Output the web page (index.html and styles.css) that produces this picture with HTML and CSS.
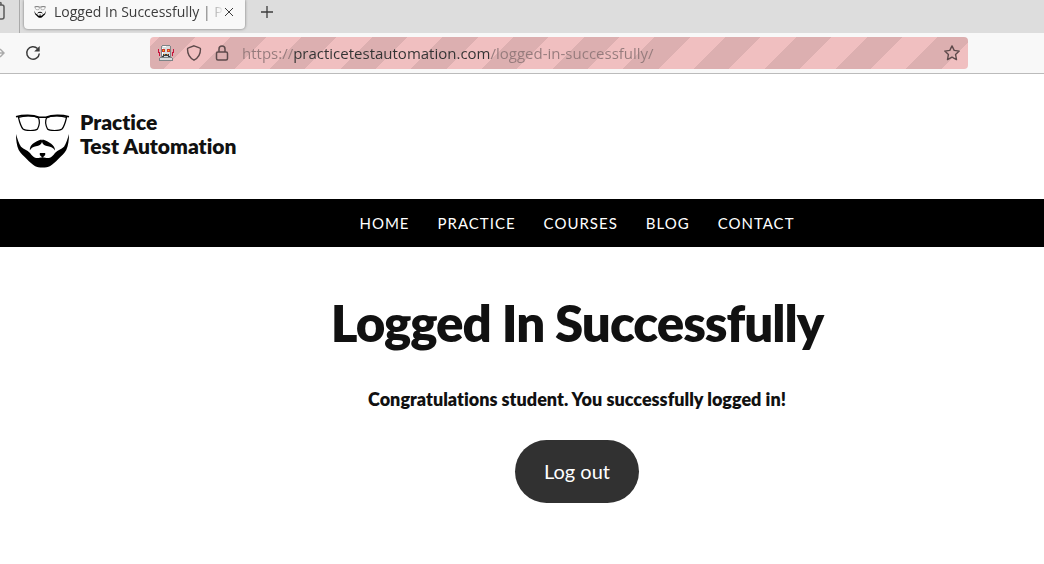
FILE: index.html
```html
<!DOCTYPE html>
<html lang="en">
<head>
    <meta charset="UTF-8">
    <meta name="viewport" content="width=device-width, initial-scale=1.0">
    <title>Logged In Successfully | Practice Test Automation</title>
    <link rel="stylesheet" href="styles.css">
</head>
<body>
    <svg class="sprite" aria-hidden="true">
        <symbol id="beard" viewBox="0 0 56 56">
            <path fill="none" stroke="#000" stroke-width="1.2" d="M4.500 4.500C10 2.300 20 2.300 24.500 5c1.500 3 .5 8-1 11-2 2-12 2-14.500 0C6.500 13 5.500 9 4.500 4.500zM52.500 4.500C47 2.300 37 2.300 32.500 5c-1.500 3-.5 8 1 11 2 2 12 2 14.500 0 2.500-3 3.500-7 4.500-11.500z"/>
            <path fill="none" stroke="#000" stroke-width="1.600" d="M2 3.800c7-2 17-2 23 .4h7c6-2.400 16-2.400 23-.4"/>
            <path d="M2 21c1.500 5 3 10 5 12.700 3 3 6 3 9 6.300 2 2.500 3 4 6 5 2.500.5 4-.8 6.500-.8s4 1.300 6.500.8c3-1 4-2.500 6-5 3-3.300 6-3.300 9-6.300 2-2.700 3.500-7.700 5-12.700 0 6-.7 11.500-2.700 16-2 3.500-5 6-8 9-3 3-5.500 5.500-8.500 7.300-3 1.700-11.600 1.700-14.600 0-3-1.800-5.500-4.300-8.500-7.300-3-3-6-5.500-8-9C2.700 32.500 2 27 2 21z"/>
            <path d="M27.300 26.500c-3 .5-6 2.500-8.500 4.300-2.300 1.700-3 4-3 6.700 1.500-3 3.500-4 6.200-4.300 3-.3 5.300-1.700 6-4.200.7 2.500 3 3.900 6 4.200 2.700.3 5.500 1.300 7 4.300 0-2.700-1.500-5-3.800-6.700-2.500-1.800-5.500-3.800-8.500-4.300l-.7 1zM25.800 40h5.400v2l-2.700 2.800-2.700-2.800z"/>
        </symbol>
    </svg>

    <div class="tabs">
        <button class="tab-list" aria-label="Recent tabs">
            <svg width="5" height="20" viewBox="0 0 5 20" fill="none" stroke="#5b5b5b" stroke-width="1.500"><path d="M-2 4h4a2 2 0 0 1 2 2v10a2 2 0 0 1-2 2h-4M1 4V2l-2-1"/></svg>
        </button>
        <div class="tab">
            <svg class="favicon" width="12" height="12"><use href="#beard"/></svg>
            <span class="tab-title">Logged In Successfully | Practice</span>
            <button class="icon" aria-label="Close tab">
                <svg width="10" height="10" viewBox="0 0 10 10" stroke="#3c3c3c"><path d="M1 1l8 8M9 1l-8 8"/></svg>
            </button>
        </div>
        <button class="icon new-tab" aria-label="New tab">
            <svg width="12" height="12" viewBox="0 0 12 12" stroke="#3c3c3c" stroke-width="1.300"><path d="M6 0v12M0 6h12"/></svg>
        </button>
    </div>

    <div class="toolbar">
        <button class="icon" aria-label="Forward">
            <svg width="5" height="10" viewBox="0 0 5 10" fill="none" stroke="#aaa" stroke-width="1.500"><path d="M0 1l4 4-4 4M0 5h4"/></svg>
        </button>
        <button class="icon reload" aria-label="Reload">
            <svg width="16" height="16" viewBox="0 0 16 16"><path fill="none" stroke="#3c3c3c" stroke-width="1.500" d="M12.500 3.500A6.300 6.300 0 1 0 14.300 8.500"/><path fill="#3c3c3c" d="M14.700 1v5.500H9.200z"/></svg>
        </button>
        <div class="address">
            <svg width="16" height="16" viewBox="0 0 16 16" shape-rendering="crispEdges">
                <path fill="#c7143c" d="M0 4h1v3h1v4H1V8H0zM15 4h1v4h-1v3h-1V7h1z"/>
                <path fill="#7d8386" d="M4 0h8v1h1v11h1v1h1v3H1v-3h1v-1h1V1h1z"/>
                <path fill="#d9dcdc" d="M4 1h8v11H4zM2 13h12v2H2z"/>
                <path fill="#fff" d="M5 1h3v1H5zM4 3h1v7H4z"/>
                <path fill="#d23b2c" d="M4 4h3v3H4zM9 4h3v3H9z"/>
                <path fill="#ffc400" d="M5 5h1v1H5zM10 5h1v1h-1z"/>
                <path fill="#3b4044" d="M5 9h6v2h1v1h-2v-1H6v1H4v-1h1z"/>
                <path fill="#f28c1e" d="M6 9h1v1H6zM9 9h1v1H9z"/>
            </svg>
            <button class="icon" aria-label="Tracking protection">
                <svg width="16" height="16" viewBox="0 0 16 16" fill="none" stroke="#5d4a4b" stroke-width="1.400"><path d="M8 .8l5.500 2c.6.2 1 .7 1 1.300C14.500 9 12.500 13 8 15.200 3.500 13 1.500 9 1.500 4.100c0-.6.400-1.100 1-1.300z"/></svg>
            </button>
            <button class="icon" aria-label="Site information">
                <svg width="16" height="16" viewBox="0 0 16 16" fill="none" stroke="#5d4a4b" stroke-width="1.500"><rect x="2.500" y="7" width="11" height="8" rx="1.500"/><path d="M5 7V4a3 3 0 0 1 6 0v3"/></svg>
            </button>
            <input class="url" type="text" aria-label="Address" value="https://practicetestautomation.com/logged-in-successfully/">
            <button class="icon" aria-label="Bookmark this page">
                <svg width="16" height="16" viewBox="0 0 16 16" fill="none" stroke="#5d4a4b" stroke-width="1.400" stroke-linejoin="round"><path d="M8 .9l2.200 4.500 5 .7-3.600 3.500.9 5L8 12.200l-4.500 2.400.9-5L.8 6.100l5-.7z"/></svg>
            </button>
        </div>
    </div>

    <header class="site-header">
        <a class="logo" href="#">
            <svg width="56" height="56" aria-hidden="true"><use href="#beard"/></svg>
            <span>Practice<br>Test Automation</span>
        </a>
    </header>

    <nav class="menu">
        <a href="#">Home</a>
        <a href="#">Practice</a>
        <a href="#">Courses</a>
        <a href="#">Blog</a>
        <a href="#">Contact</a>
    </nav>

    <main class="content">
        <h1>Logged In Successfully</h1>
        <p><strong>Congratulations student. You successfully logged in!</strong></p>
        <a class="btn" href="#">Log out</a>
    </main>
</body>
</html>
```
FILE: styles.css
```css
* {
    box-sizing: border-box;
}
body {
    margin: 0;
    background: #fff;
    color: #111;
    font-family: Lato, sans-serif;
    font-variant-ligatures: none;
}
a {
    color: inherit;
    text-decoration: none;
}
button {
    border: none;
    padding: 0;
    background: none;
    cursor: pointer;
}
svg {
    display: block;
    flex-shrink: 0;
}
.sprite {
    display: none;
}

/* browser bars */
.tabs {
    display: flex;
    height: 33px;
    background: #ddd;
    font-family: "Open Sans", sans-serif;
}
.tab-list {
    width: 20px;
    padding-bottom: 12px;
    border-right: 1px solid #aaa;
}
.tab {
    display: flex;
    align-items: center;
    width: 221px;
    height: 29px;
    margin-left: 4px;
    padding: 0 11px 5px 10px;
    background: #f8f8f8;
    border-radius: 0 0 4px 4px;
    box-shadow: 0 0 3px rgba(0,0,0,0.5);
}
.tab-title {
    flex: 1;
    margin-left: 8px;
    overflow: hidden;
    white-space: nowrap;
    font-size: 14px;
    line-height: 20px;
    color: #3c3c3c;
    -webkit-mask-image: linear-gradient(to left, transparent, #000 24px);
    mask-image: linear-gradient(to left, transparent, #000 24px);
}
.new-tab {
    margin-left: 16px;
    padding-bottom: 9px;
}
.toolbar {
    display: flex;
    align-items: center;
    height: 41px;
    background: #f8f8f8;
    border-bottom: 1px solid #bbb;
}
.reload {
    margin-left: 20px;
}
.address {
    display: flex;
    align-items: center;
    gap: 12px;
    flex: 1;
    height: 32px;
    margin: 0 76px 0 109px;
    padding: 0 8px;
    border-radius: 4px;
    background: repeating-linear-gradient(-45deg, #f0bfc0 0 19px, #dcafb0 19px 44px, #f0bfc0 44px 50px);
}
.url {
    flex: 1;
    min-width: 0;
    padding: 0;
    border: none;
    outline: none;
    font-family: "Open Sans", sans-serif;
    font-size: 15px;
    line-height: 20px;
    color: transparent;
    background: linear-gradient(to right, #957b7c 52px, #333 52px 249px, #957b7c 249px);
    -webkit-background-clip: text;
    background-clip: text;
}

/* page */
.site-header {
    padding: 36px 14px 30px;
}
.logo {
    display: flex;
    gap: 10px;
    font-size: 21px;
    font-weight: 800;
    line-height: 24px;
}
.logo svg {
    margin-top: 3px;
}
.menu {
    display: flex;
    justify-content: center;
    gap: 28px;
    padding: 12px 0 12px 110px;
    background: #000;
    color: #fff;
    font-size: 15px;
    line-height: 24px;
    letter-spacing: 1px;
    text-transform: uppercase;
}
.content {
    padding: 45px 0 60px 110px;
    text-align: center;
}
h1 {
    margin: 0;
    font-size: 51px;
    font-weight: 800;
    line-height: 62px;
    letter-spacing: -1px;
}
p {
    margin: 31px 0 27px;
    font-size: 18px;
    line-height: 28px;
}
strong {
    font-weight: 800;
}
.btn {
    display: inline-block;
    padding: 16px 29px;
    border-radius: 32px;
    background: #313131;
    color: #fff;
    font-size: 20px;
    line-height: 31px;
}
```
